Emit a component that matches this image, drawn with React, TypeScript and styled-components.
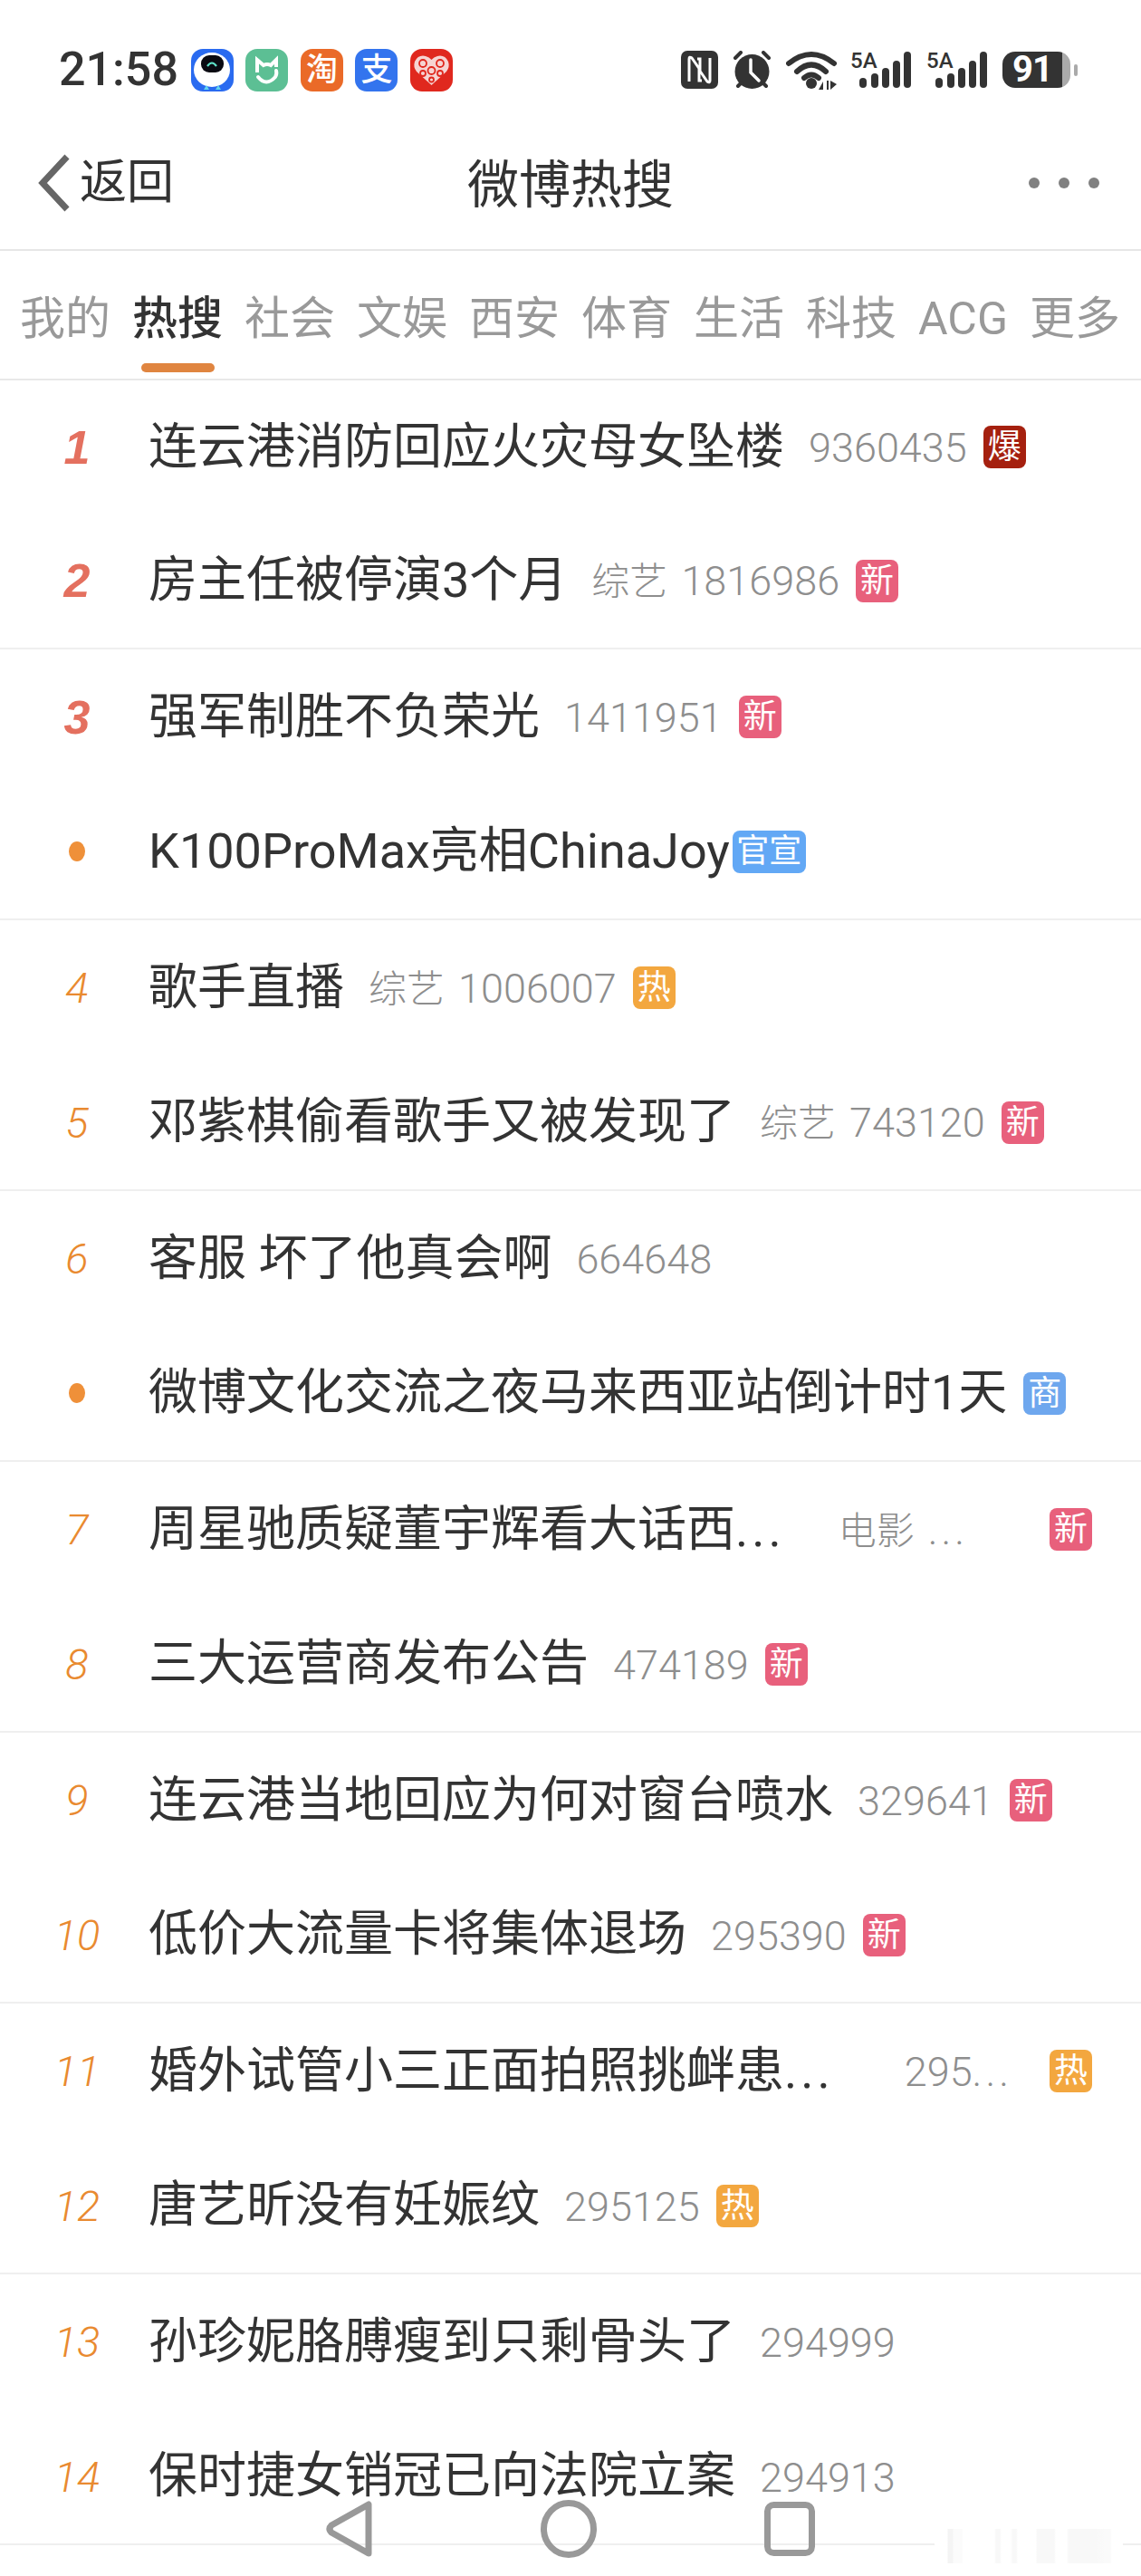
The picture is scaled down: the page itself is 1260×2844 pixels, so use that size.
import React from 'react';
import styled, { createGlobalStyle } from 'styled-components';

const GlobalStyle = createGlobalStyle`
  html, body {
    margin: 0;
    padding: 0;
    background: #fff;
  }
  body {
    font-family: Roboto, "Noto Sans CJK SC", sans-serif;
    color: #333;
  }
`;

const Page = styled.div`
  position: relative;
  width: 1260px;
  height: 2844px;
  overflow: hidden;
  background: #fff;
`;

const StatusBar = styled.div`
  display: flex;
  align-items: center;
  height: 154px;
  padding: 0 70px 0 65px;
  box-sizing: border-box;
`;

const Clock = styled.div`
  font-size: 52px;
  font-weight: 500;
  line-height: 1;
  color: #333;
  margin-right: 14px;
`;

const AppIcons = styled.div`
  display: flex;
  gap: 13.5px;
`;

const AppIcon = styled.div<{ $bg: string }>`
  display: flex;
  align-items: center;
  justify-content: center;
  width: 47px;
  height: 47px;
  border-radius: 13px;
  background: ${props => props.$bg};
  color: #fff;
  font-size: 35px;
  font-weight: 500;
  line-height: 1;
  overflow: hidden;
`;

const SysIcons = styled.div`
  display: flex;
  align-items: center;
  margin-left: auto;
`;

const SysIcon = styled.svg<{ $gap: number; $lift?: number }>`
  display: block;
  margin-right: ${props => props.$gap}px;
  margin-top: ${props => -(props.$lift ?? 0)}px;
`;

const Battery = styled.div`
  display: flex;
  align-items: center;
  justify-content: center;
  width: 75px;
  height: 40px;
  padding-right: 9px;
  box-sizing: border-box;
  border-radius: 14px;
  background: linear-gradient(90deg, #333 88%, #aaa 88%);
  color: #fff;
  font-size: 40px;
  font-weight: 700;
  line-height: 1;
  letter-spacing: -1px;
`;

const BatteryCap = styled.div`
  width: 4px;
  height: 13px;
  margin-left: 4px;
  border-radius: 2px;
  background: #aaa;
`;

const NavBar = styled.div`
  position: relative;
  display: flex;
  align-items: center;
  justify-content: center;
  height: 123px;
  box-sizing: border-box;
  border-bottom: 2px solid #e6e6e6;
  padding-bottom: 20px;
`;

const BackButton = styled.div`
  position: absolute;
  left: 42px;
  top: 16px;
  display: flex;
  align-items: center;
  gap: 10px;
  font-size: 52px;
  line-height: 60px;
  color: #333;
`;

const NavTitle = styled.div`
  font-size: 57px;
  line-height: 70px;
  color: #333;
`;

const MoreDots = styled.div`
  position: absolute;
  right: 46px;
  top: 42px;
  display: flex;
  gap: 21px;
`;

const MoreDot = styled.span`
  width: 12px;
  height: 12px;
  border-radius: 50%;
  background: #808080;
`;

const Tabs = styled.div`
  display: flex;
  gap: 24px;
  height: 143px;
  padding: 46px 0 0 22px;
  box-sizing: border-box;
  border-bottom: 2px solid #e8e8e8;
`;

const Tab = styled.div<{ $active?: boolean }>`
  position: relative;
  font-size: 50px;
  line-height: 58px;
  white-space: nowrap;
  font-weight: ${props => (props.$active ? 500 : 400)};
  color: ${props => (props.$active ? '#333' : '#999')};
`;

const TabMark = styled.span`
  position: absolute;
  left: 10px;
  top: 78px;
  width: 81px;
  height: 10px;
  border-radius: 5px;
  background: #e08540;
`;

const Row = styled.div`
  display: flex;
  align-items: center;
  height: 149.5px;
  box-sizing: border-box;
  padding: 0 54px 0 22px;

  &:first-child {
    height: 147.5px;
  }
  &:nth-child(even) {
    border-bottom: 2px solid #efefef;
  }
`;

const Rank = styled.div<{ $top?: boolean }>`
  flex: none;
  width: 126px;
  margin-right: 16px;
  text-align: center;
  line-height: 1;
  font-style: italic;
  font-family: ${props => (props.$top ? '"Liberation Sans"' : 'Roboto')}, sans-serif;
  font-size: ${props => (props.$top ? 52 : 47)}px;
  font-weight: ${props => (props.$top ? 700 : 300)};
  color: ${props => (props.$top ? '#e4705f' : '#e98a30')};
`;

const PromoDot = styled.span`
  display: block;
  width: 18px;
  height: 22px;
  margin: 0 auto;
  border-radius: 50%;
  background: #ef9039;
`;

const Title = styled.div`
  flex: none;
  font-size: 54px;
  line-height: 70px;
  color: #333;
  white-space: nowrap;
`;

const Meta = styled.div<{ $gap?: number }>`
  flex: none;
  margin-left: ${props => props.$gap ?? 27}px;
  padding-top: 3px;
  font-size: 45px;
  font-weight: 300;
  line-height: 70px;
  color: #8e8e8e;
  white-space: nowrap;
`;

const Category = styled.span`
  font-size: 42px;
  margin-right: 15px;
`;

const Dots = styled.span`
  letter-spacing: 4px;
`;

const Badge = styled.span<{ $bg: string; $wide?: boolean; $push?: boolean; $gap?: number }>`
  flex: none;
  display: flex;
  align-items: center;
  justify-content: center;
  width: ${props => (props.$wide ? 81 : 47)}px;
  height: 47px;
  margin-left: ${props => (props.$push ? 'auto' : `${props.$gap ?? 18}px`)};
  border-radius: 8px;
  background: ${props => props.$bg};
  color: #fff;
  font-size: ${props => (props.$wide ? 36 : 37)}px;
  line-height: 1;
`;

const HomeBar = styled.div`
  position: absolute;
  left: 360px;
  top: 2760px;
  display: flex;
  align-items: center;
  gap: 185px;
`;

const Watermark = styled.div`
  position: absolute;
  left: 1032px;
  top: 2792px;
  width: 208px;
  height: 38px;
  background: linear-gradient(
    90deg,
    #fff 0 14px,
    #f4f4f4 15px 20px,
    #fbfbfb 21px 30px,
    #fff 32px 66px,
    #f8f8f8 68px 72px,
    #fff 74px 84px,
    #f8f8f8 86px 90px,
    #fff 92px 112px,
    #f8f8f8 113px 132px,
    #fff 134px 146px,
    #f8f8f8 148px 178px,
    #fafafa 188px 194px,
    #fff 196px
  );
`;

type BadgeKind = 'bao' | 'xin' | 're' | 'guan' | 'shang';

const BADGES: Record<BadgeKind, { text: string; bg: string }> = {
  bao: { text: '爆', bg: '#a5200f' },
  xin: { text: '新', bg: '#e8607c' },
  re: { text: '热', bg: '#f3a73f' },
  guan: { text: '官宣', bg: '#62a8f5' },
  shang: { text: '商', bg: '#6ea7ee' },
};

type Item = {
  rank?: number;
  title: string;
  clipped?: boolean;
  category?: string;
  count?: string;
  badge?: BadgeKind;
  metaGap?: number;
  badgeGap?: number;
  push?: boolean;
};

const ITEMS: Item[] = [
  { rank: 1, title: '连云港消防回应火灾母女坠楼', count: '9360435', badge: 'bao' },
  { rank: 2, title: '房主任被停演3个月', category: '综艺', count: '1816986', badge: 'xin' },
  { rank: 3, title: '强军制胜不负荣光', count: '1411951', badge: 'xin' },
  { title: 'K100ProMax亮相ChinaJoy', badge: 'guan', badgeGap: 3 },
  { rank: 4, title: '歌手直播', category: '综艺', count: '1006007', badge: 're' },
  { rank: 5, title: '邓紫棋偷看歌手又被发现了', category: '综艺', count: '743120', badge: 'xin' },
  { rank: 6, title: '客服 坏了他真会啊', count: '664648' },
  { title: '微博文化交流之夜马来西亚站倒计时1天', badge: 'shang' },
  { rank: 7, title: '周星驰质疑董宇辉看大话西', clipped: true, category: '电影', badge: 'xin', metaGap: 59, push: true },
  { rank: 8, title: '三大运营商发布公告', count: '474189', badge: 'xin' },
  { rank: 9, title: '连云港当地回应为何对窗台喷水', count: '329641', badge: 'xin' },
  { rank: 10, title: '低价大流量卡将集体退场', count: '295390', badge: 'xin' },
  { rank: 11, title: '婚外试管小三正面拍照挑衅患', clipped: true, count: '295', badge: 're', metaGap: 78, push: true },
  { rank: 12, title: '唐艺昕没有妊娠纹', count: '295125', badge: 're' },
  { rank: 13, title: '孙珍妮胳膊瘦到只剩骨头了', count: '294999' },
  { rank: 14, title: '保时捷女销冠已向法院立案', count: '294913' },
];

const TAB_NAMES = ['我的', '热搜', '社会', '文娱', '西安', '体育', '生活', '科技', 'ACG', '更多'];

const Mascot = () => (
  <svg width="47" height="47" viewBox="0 0 47 47">
    <ellipse cx="23" cy="23" rx="20" ry="19" fill="#fff" />
    <rect x="11" y="7" width="25" height="19" rx="9" fill="#0a0a12" />
    <path d="M18 19 q5 -7 10 0" fill="none" stroke="#5fe0c8" strokeWidth="2.2" />
    <path d="M17 40 l3 5 h-6z M30 40 l3 5 h-6z" fill="#63d5ee" />
  </svg>
);

const MiHome = () => (
  <svg width="47" height="47" viewBox="0 0 47 47" fill="none" stroke="#fff" strokeWidth="4">
    <path d="M13 26 V12 l7 6 q4 -2 8 0 l6 -6 v8" />
    <path d="M14 31 q9 11 19 0 q2 -3 1 -7" strokeLinecap="round" />
  </svg>
);

const Pinduoduo = () => (
  <svg width="47" height="47" viewBox="0 0 47 47">
    <path d="M23.5 40 L7 25 Q3 20 5 14 Q9 6 17 8 Q21 9 23.5 12 Q26 9 30 8 Q38 6 42 14 Q44 20 40 25 Z" fill="#f6d4d2" />
    <g fill="none" stroke="#e0281e" strokeWidth="1.8">
      <circle cx="14" cy="16" r="4" />
      <circle cx="33" cy="16" r="4" />
      <circle cx="23.5" cy="24" r="4" />
      <circle cx="14" cy="27" r="3" />
      <circle cx="33" cy="27" r="3" />
      <circle cx="23.5" cy="34" r="2.5" />
    </g>
  </svg>
);

const SignalIcon = () => (
  <SysIcon $gap={16} $lift={6} width="68" height="48" viewBox="0 -6 68 48">
    <text x="0" y="19" fontFamily="Roboto" fontSize="24" fontWeight="500" fill="#333">5A</text>
    <g stroke="#333" strokeWidth="8" strokeLinecap="round">
      <path d="M14 34 V37" />
      <path d="M27 29 V37" />
      <path d="M39 23 V37" />
      <path d="M51 15 V37" />
      <path d="M63 5 V37" />
    </g>
  </SysIcon>
);

const HotRow = ({ item }: { item: Item }) => {
  const badge = item.badge && BADGES[item.badge];
  const hasMeta = item.category || item.count;
  return (
    <Row>
      <Rank $top={item.rank !== undefined && item.rank <= 3}>
        {item.rank ?? <PromoDot />}
      </Rank>
      <Title>
        {item.title}
        {item.clipped && <Dots>...</Dots>}
      </Title>
      {hasMeta && (
        <Meta $gap={item.metaGap}>
          {item.category && <Category>{item.category}</Category>}
          {item.count}
          {item.clipped && <Dots>...</Dots>}
        </Meta>
      )}
      {badge && (
        <Badge $bg={badge.bg} $wide={badge.text.length > 1} $push={item.push} $gap={item.badgeGap}>
          {badge.text}
        </Badge>
      )}
    </Row>
  );
};

const App = () => (
  <Page>
    <GlobalStyle />
    <StatusBar>
      <Clock>21:58</Clock>
      <AppIcons>
        <AppIcon $bg="#2a6bf0"><Mascot /></AppIcon>
        <AppIcon $bg="#5cbf94"><MiHome /></AppIcon>
        <AppIcon $bg="#ea6a28">淘</AppIcon>
        <AppIcon $bg="#3374ee">支</AppIcon>
        <AppIcon $bg="#e0281e"><Pinduoduo /></AppIcon>
      </AppIcons>
      <SysIcons>
        <SysIcon $gap={16} width="41" height="42" viewBox="0 0 41 42">
          <rect width="41" height="42" rx="7" fill="#333" />
          <path d="M9 34 V9 q0 -3 3 -1 l9 13 V9 h-3 M32 8 v25 q0 3 -3 1 l-9 -13 v12 h3" fill="none" stroke="#fff" strokeWidth="3" />
        </SysIcon>
        <SysIcon $gap={16} width="43" height="43" viewBox="0 0 43 43">
          <circle cx="21.5" cy="23" r="19" fill="#333" />
          <path d="M3 8 L9 2 M40 8 L34 2 M6 39 L10 35 M37 39 L33 35" stroke="#333" strokeWidth="4" strokeLinecap="round" />
          <path d="M20 10 V24 L29 33" fill="none" stroke="#fff" strokeWidth="3.5" strokeLinecap="round" />
        </SysIcon>
        <SysIcon $gap={14} width="57" height="43" viewBox="0 0 57 43">
          <g fill="none" stroke="#333" strokeWidth="6" strokeLinecap="round">
            <path d="M3 14 Q28 -6 53 14" />
            <path d="M12 23 Q28 8 44 23" />
            <path d="M20 30 Q28 23 36 30" />
          </g>
          <circle cx="28" cy="36" r="6" fill="#333" />
          <path d="M36 43 L41 34 V43 Z M45 33 h2 v10 h-2 Z M49 33 L56 37 L49 43 Z" fill="#333" />
        </SysIcon>
        <SignalIcon />
        <SignalIcon />
        <Battery>91</Battery>
        <BatteryCap />
      </SysIcons>
    </StatusBar>
    <NavBar>
      <BackButton>
        <svg width="36" height="64" viewBox="0 0 36 64">
          <path d="M32 3 L5 32 L32 61" fill="none" stroke="#666" strokeWidth="7" />
        </svg>
        返回
      </BackButton>
      <NavTitle>微博热搜</NavTitle>
      <MoreDots>
        <MoreDot />
        <MoreDot />
        <MoreDot />
      </MoreDots>
    </NavBar>
    <Tabs>
      {TAB_NAMES.map(name => (
        <Tab key={name} $active={name === '热搜'}>
          {name}
          {name === '热搜' && <TabMark />}
        </Tab>
      ))}
    </Tabs>
    <div>
      {ITEMS.map(item => (
        <HotRow key={item.title} item={item} />
      ))}
    </div>
    <HomeBar>
      <svg width="52" height="64" viewBox="0 0 52 64">
        <path d="M47 5 V59 L6 36 Q2 32 6 28 Z" fill="none" stroke="#999" strokeWidth="7" strokeLinejoin="round" />
      </svg>
      <svg width="62" height="64" viewBox="0 0 62 64">
        <ellipse cx="31" cy="32" rx="27.5" ry="28.5" fill="none" stroke="#999" strokeWidth="7" />
      </svg>
      <svg width="56" height="60" viewBox="0 0 56 60">
        <rect x="3.5" y="3.5" width="49" height="53" rx="7" fill="none" stroke="#999" strokeWidth="7" />
      </svg>
    </HomeBar>
    <Watermark />
  </Page>
);

export default App;
